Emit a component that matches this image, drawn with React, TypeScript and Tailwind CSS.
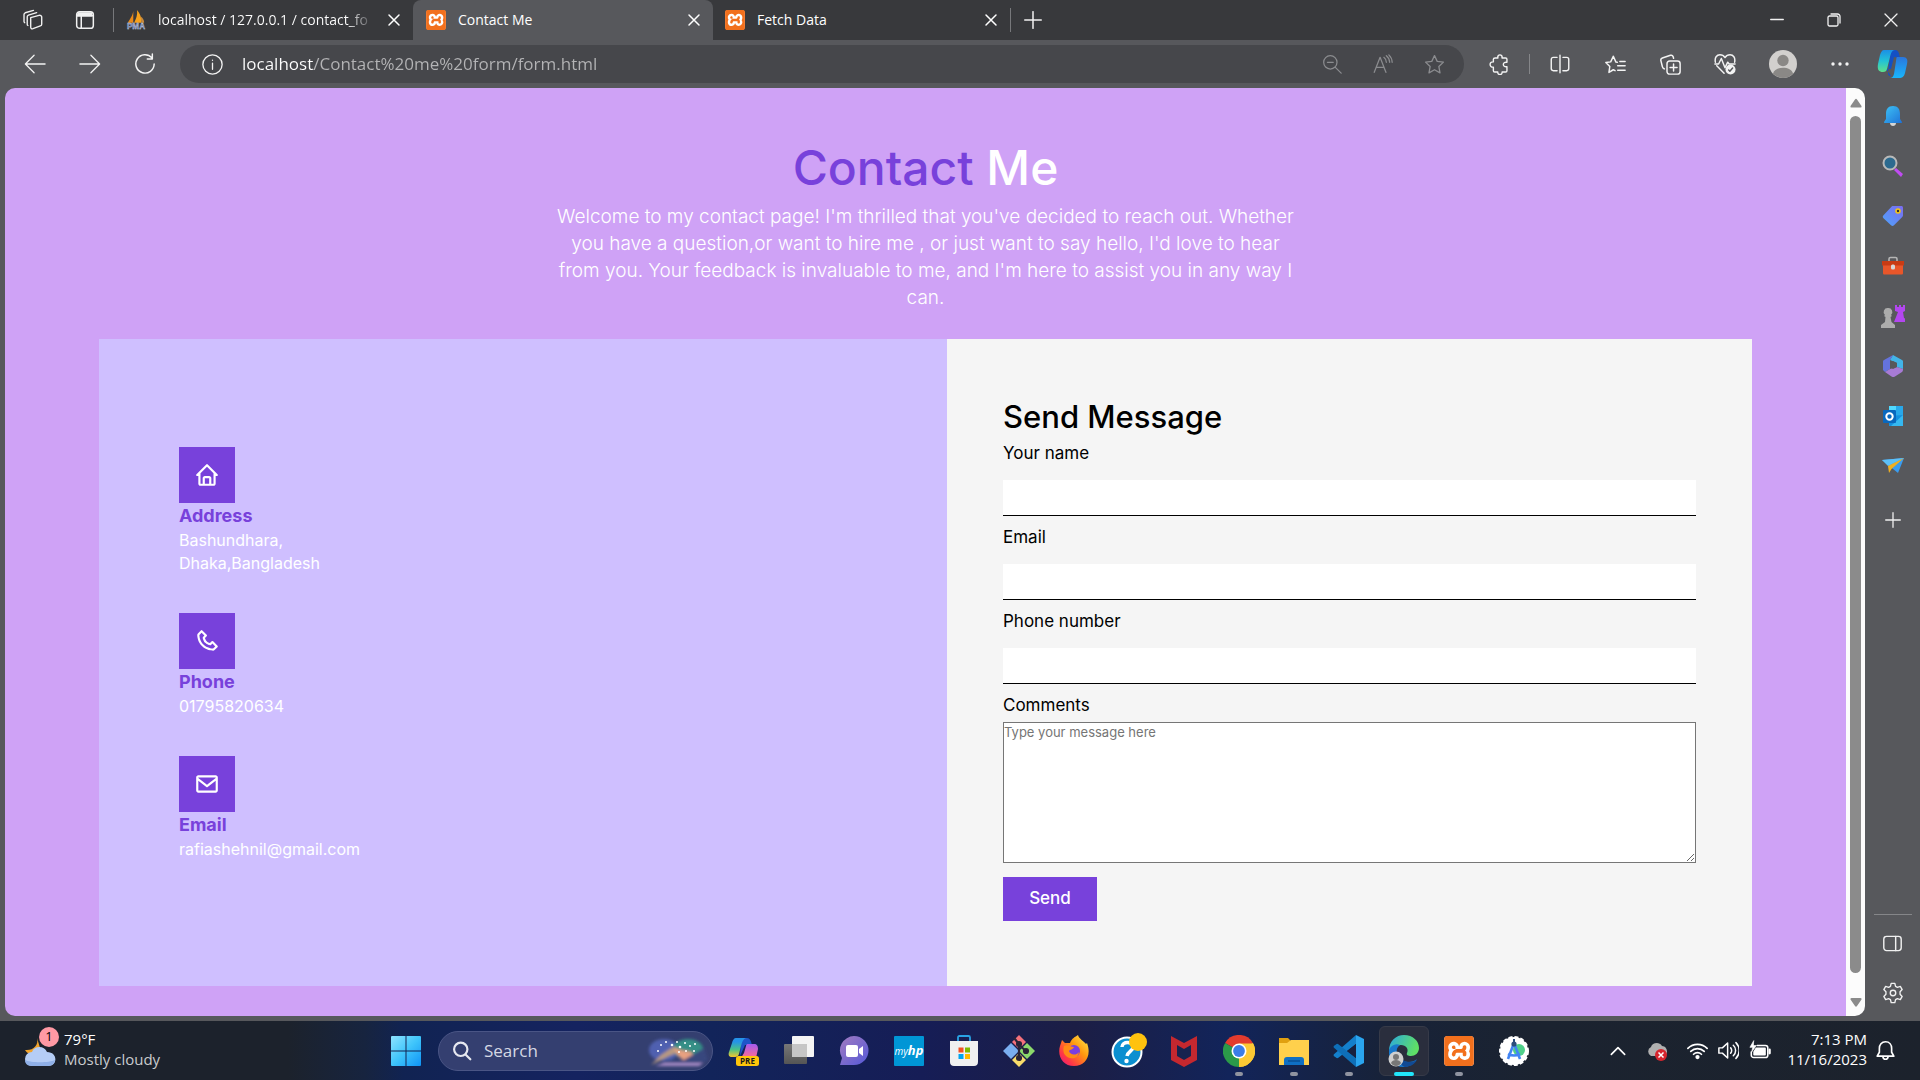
import React from "react";
import { BiHome, BiPhone, BiEnvelope } from "react-icons/bi";
import { SiXampp } from "react-icons/si";

type IconProps = { className?: string; size?: number; box?: string; width?: number; children: React.ReactNode };

function Line({ size = 24, box = "0 0 24 24", width = 1.4, className = "", children }: IconProps) {
  return (
    <svg aria-hidden="true" width={size} height={size} viewBox={box} fill="none" stroke="currentColor" strokeWidth={width} strokeLinecap="round" strokeLinejoin="round" className={`shrink-0 ${className}`}>
      {children}
    </svg>
  );
}

function Art({ size = 32, box = "0 0 32 32", className = "", children }: IconProps) {
  return (
    <svg aria-hidden="true" width={size} height={size} viewBox={box} className={`shrink-0 ${className}`}>
      {children}
    </svg>
  );
}

function IconButton({ label, className = "", children }: { label: string; className?: string; children: React.ReactNode }) {
  return (
    <button type="button" aria-label={label} className={`flex h-full shrink-0 items-center justify-center ${className}`}>
      {children}
    </button>
  );
}

const CloseIcon = () => (
  <Line size={14} box="0 0 14 14" width={1.5}><path d="M2 2l10 10M12 2L2 12" /></Line>
);

const XamppIcon = ({ size }: { size: number }) => (
  <span className="flex shrink-0 rounded-sm bg-white">
    <SiXampp size={size} className="text-[#f2701d]" />
  </span>
);

const PmaIcon = () => (
  <Art size={20} box="0 0 22 22">
    <path d="M8 1C7 7 4 10 2 14h6z" fill="#e8891a" />
    <path d="M12 0c4 4 5 9 5 14H9c2-4 4-9 3-14z" fill="#f7a11b" />
    <path d="M16 7c3 2 4 5 4 7h-3z" fill="#c98b3d" />
    <text x="11" y="21" textAnchor="middle" fontSize="9" fontWeight="700" fontFamily="Liberation Sans, sans-serif" fill="#6c78af" stroke="#dfe2f2" strokeWidth=".3">PMA</text>
  </Art>
);

function Tab({ title, icon, active = false, faded = false, className = "" }: { title: string; icon: React.ReactNode; active?: boolean; faded?: boolean; className?: string }) {
  return (
    <div className={`flex h-10 shrink-0 items-center pr-3 text-sm whitespace-nowrap text-white ${active ? "rounded-t-lg bg-[#57585c]" : ""} ${className}`}>
      {icon}
      <span className={`ml-3 min-w-0 flex-1 ${faded ? "bg-[linear-gradient(90deg,#fff_190px,#55565a_212px)] bg-clip-text text-transparent" : ""}`}>{title}</span>
      <button type="button" aria-label={`Close ${title}`} className="flex shrink-0"><CloseIcon /></button>
    </div>
  );
}

function TabStrip() {
  return (
    <header className="flex h-10 shrink-0 items-center bg-[#38393c] text-[#f1f1f1]">
      <IconButton label="Workspaces" className="ml-[21px] w-6">
        <Line size={22} width={1.5}>
          <path d="M9.5 9.500l9-2.500c1.600-.4 2.800.2 3 1.600v7.900c0 1-.6 1.700-1.500 2l-8 3c-1.500.5-2.500-.3-2.500-1.500z" />
          <path d="M6.500 18c-.6-.3-.8-.8-.8-1.400V8.500c0-1 .4-1.500 1.300-1.900l9-2.600" />
          <path d="M3 15c-.5-.3-.8-.7-.8-1.300V6c0-1 .4-1.500 1.300-1.900l9-2.600" />
        </Line>
      </IconButton>
      <IconButton label="Tab actions" className="ml-[28px] w-6">
        <Line size={20} width={1.8}>
          <rect x="2" y="2" width="20" height="20" rx="3.500" /><path d="M2.500 7h19M7.500 8v14" /><path d="M4 3.500h16v3.500H3z" fill="currentColor" />
        </Line>
      </IconButton>
      <span className="mr-3 ml-4 h-6 w-px shrink-0 bg-[#77787b]" />
      <Tab className="w-[287px]" faded title="localhost / 127.0.0.1 / contact_fo" icon={<PmaIcon />} />
      <Tab className="w-[300px] pl-[13px]" active title="Contact Me" icon={<XamppIcon size={20} />} />
      <Tab className="w-[297px] pl-3" title="Fetch Data" icon={<XamppIcon size={20} />} />
      <span className="h-6 w-px shrink-0 bg-[#77787b]" />
      <IconButton label="New tab" className="ml-[13px]">
        <Line size={18} box="0 0 18 18" width={1.5}><path d="M9 .7v16.600M.7 9h16.600" /></Line>
      </IconButton>
      <div className="mr-px ml-auto flex h-full">
        <IconButton label="Minimize" className="w-[57px]"><Line size={14} box="0 0 14 14" width={1.3}><path d="M.7 6.500h12.600" /></Line></IconButton>
        <IconButton label="Restore" className="w-[57px]">
          <Line size={14} box="0 0 14 14" width={1.3}><rect x="1" y="3" width="10" height="10" rx="1.500" /><path d="M4 1h6.500A2.500 2.500 0 0113 3.500V10" /></Line>
        </IconButton>
        <IconButton label="Close window" className="w-[57px]"><Line size={14} box="0 0 14 14" width={1.3}><path d="M1 1l12 12M13 1L1 13" /></Line></IconButton>
      </div>
    </header>
  );
}

const STAR = "M12 1.800l3.100 6.600 7.100.9-5.200 5 1.300 7.200L12 18l-6.300 3.500 1.300-7.200-5.200-5 7.100-.9z";

const CopilotIcon = () => (
  <Art size={32}>
    <defs>
      <linearGradient id="cp1" x1="0" y1="0" x2="0" y2="1"><stop offset="0" stopColor="#1b8fe6" /><stop offset=".5" stopColor="#22c2d6" /><stop offset="1" stopColor="#5fe08a" /></linearGradient>
      <linearGradient id="cp2" x1="0" y1="0" x2="0" y2="1"><stop offset="0" stopColor="#2a76dd" /><stop offset="1" stopColor="#19b6fb" /></linearGradient>
    </defs>
    <path d="M14 2h4c3 0 4 2 5 8l-6-1-3 12H9l5 7c-3 0-3-2-3-5z" fill="#1450c4" />
    <path d="M7 2h11c-3 0-4 3-5 7l-3 12c-.5 2-1.500 3-4 3-4 0-6-2-5-8l2-9c1-3 2-5 4-5z" fill="url(#cp1)" />
    <path d="M20 9h6c4 0 5 3 4 7l-2 9c-1 4-3 5-6 5h-9c2 0 3-1 4-4l2-13c.3-2 .5-4 1-4z" fill="url(#cp2)" />
  </Art>
);

function AddressBar() {
  return (
    <nav aria-label="Browser toolbar" className="flex h-12 shrink-0 items-center bg-[#57585c] text-[#f3f3f3]">
      <IconButton label="Back" className="w-[55px] pl-[15px]"><Line size={22}><path d="M23 12H2M11 2.500L1.500 12l9.500 9.500" /></Line></IconButton>
      <IconButton label="Forward" className="w-[55px] pl-[15px]"><Line size={22}><path d="M1 12h21M13 2.500l9.500 9.500-9.500 9.500" /></Line></IconButton>
      <IconButton label="Reload" className="w-[55px] pl-[15px]"><Line size={22} width={1.6}><path d="M22 12A10 10 0 1119.500 5.300M20 1v5.500h-5.500" /></Line></IconButton>
      <div className="ml-[15px] flex h-[38px] min-w-0 flex-1 items-center rounded-full bg-[#46474b] pr-[19px] pl-[22px]">
        <Line size={21} width={1.5}><circle cx="12" cy="12" r="11" /><path d="M12 10.500v7M12 7v.2" /></Line>
        <input
          type="text"
          aria-label="Address"
          defaultValue="localhost/Contact%20me%20form/form.html"
          className="ml-[19px] min-w-0 flex-1 bg-[linear-gradient(90deg,#fff_72px,#b4b4b6_72px)] bg-clip-text text-[17px] text-transparent outline-none"
        />
        <div className="flex items-center gap-[31px] text-[#8b8c8f]">
          <button type="button" aria-label="Zoom out" className="flex"><Line size={20} width={1.5}><circle cx="10" cy="10" r="8" /><path d="M16 16l7 7M6.500 10h7" /></Line></button>
          <button type="button" aria-label="Read aloud" className="flex"><Line size={20} width={1.5}><path d="M1.500 22L8.500 4l7 18M4 16h9M13 4c2 1.500 3 3.500 3 6M16 2c3 2.500 4 5 4 8M19 1c3 3 4 6 4 9" /></Line></button>
          <button type="button" aria-label="Favorite" className="flex"><Line size={21} width={1.5}><path d={STAR} /></Line></button>
        </div>
      </div>
      <div className="flex h-full items-center">
        <IconButton label="Extensions" className="ml-[25px] w-5">
          <Line size={21} width={1.6}><path d="M7 4.500h3.200C9.500 2.500 11 1 12.500 1s3 1.500 2.300 3.500H19c1 0 1.500.5 1.500 1.500v3.500c-5.500-1-5.500 6 0 5V19c0 1-.5 1.500-1.500 1.500h-4c.5 4-5.500 4-5 0H6.500c-1 0-1.500-.5-1.500-1.500v-4c-5 .5-5-6.500 0-6V6c0-1 .5-1.500 2-1.500z" /></Line>
        </IconButton>
        <span className="mx-5 h-5 w-px bg-[#858689]" />
        <IconButton label="Split screen" className="w-5"><Line size={20} width={1.7}><path d="M12 1.500v21M8.500 4H4C2.500 4 1.500 5 1.500 6.500v11C1.500 19 2.500 20 4 20h4.500M15.500 4H20c1.500 0 2.500 1 2.500 2.500v11c0 1.500-1 2.500-2.500 2.500h-4.500" /></Line></IconButton>
        <IconButton label="Favorites" className="ml-[35px] w-5"><Line size={21} width={1.7}><path d="M14 9.500l-1.500-.2L9.500 2.500l-3 6.500-5.500.8 4.500 4.500-1 6.800L9.500 18l2 1M17 8.500h6M14.500 13.500H23M14.500 18.500H23" /></Line></IconButton>
        <IconButton label="Collections" className="ml-[35px] w-5"><Line size={21} width={1.7}><rect x="8" y="8" width="15" height="15" rx="3" /><path d="M15.500 11.500v8M11.500 15.500h8M5 17l-.8-.4C3 16 3 15.500 2.600 14L1 7.500C.7 6 1.200 5 2.700 4.500L12 1.500c1.500-.5 2.500.2 3 1.500l.5 1.800" /></Line></IconButton>
        <IconButton label="Browser essentials" className="ml-[35px] w-5">
          <Line size={22} width={1.6}><path d="M1.500 10C.5 5 3 2 6.500 2 9 2 11 3.500 12 5c1-1.500 3-3 5.500-3C21 2 23.500 5 22.500 10M3 14l8 8M1 12h4l3-6 4 10 3-6 1.500 2H23" /><circle cx="18" cy="18" r="5.500" fill="currentColor" stroke="none" /><path d="M16 18.500l1.300 1.300 3-3.500" stroke="#57585c" /></Line>
        </IconButton>
        <IconButton label="Profile" className="ml-[34px] w-7">
          <Art size={28}><circle cx="16" cy="16" r="16" fill="#d2d0ce" /><circle cx="16" cy="12" r="6.500" fill="#8a8886" /><path d="M4.500 27c2-9 21-9 23 0A16 16 0 014.500 27z" fill="#8a8886" /></Art>
        </IconButton>
        <IconButton label="Settings and more" className="ml-[33px] w-5"><Art size={18} box="0 0 18 18"><g fill="#f3f3f3"><circle cx="2" cy="9" r="1.700" /><circle cx="9" cy="9" r="1.700" /><circle cx="16" cy="9" r="1.700" /></g></Art></IconButton>
        <IconButton label="Copilot" className="mr-[11px] ml-[27px] w-8"><CopilotIcon /></IconButton>
      </div>
    </nav>
  );
}

const sideIcons: { label: string; art: React.ReactNode }[] = [
  { label: "Notifications", art: <Art size={22} box="0 0 22 22"><defs><linearGradient id="bell" x1="0" y1="0" x2="1" y2="1"><stop stopColor="#3ec3f5" /><stop offset="1" stopColor="#1e72d8" /></linearGradient></defs><path d="M8 18h6c0 4-6 4-6 0z" fill="#d5d5d5" /><path d="M11 1c5 0 7 3 7 8v5l2 3c0 1-.5 1-1 1H3c-.5 0-1 0-1-1l2-3V9c0-5 2-8 7-8z" fill="url(#bell)" /></Art> },
  { label: "Search", art: <Art size={22} box="0 0 22 22"><path d="M14 13l7 6-2 3-7-7z" fill="#c04bf2" /><circle cx="8" cy="8" r="6.500" fill="#2c6a8f" stroke="#b9b9b9" strokeWidth="2" /></Art> },
  { label: "Shopping", art: <Art size={22} box="0 0 22 22"><defs><linearGradient id="tag" x1="1" y1="0" x2="0" y2="1"><stop stopColor="#7b6cf0" /><stop offset="1" stopColor="#4ea4fb" /></linearGradient></defs><path d="M11 1h8c1.500 0 2 .5 2 2v7c0 1-.3 1.600-1 2.300l-8 8c-1 1-2 1-3 0l-7.500-7c-1-1-1-2 0-3l7.500-8c.7-.8 1-1.300 2-1.300z" fill="url(#tag)" /><circle cx="16" cy="6" r="2" fill="#333" stroke="#f5c518" strokeWidth="1.600" /></Art> },
  { label: "Tools", art: <Art size={22} box="0 0 22 22"><path d="M7 6V4c0-1 .5-1.500 1.500-1.500h5c1 0 1.500.5 1.500 1.500v2" fill="none" stroke="#b5b5b5" strokeWidth="1.600" /><path d="M1 6h20v12c0 1-.5 1.500-1.500 1.500h-17C1.500 19.500 1 19 1 18z" fill="#e8562a" /><path d="M0 6h22v4.500H0z" fill="#c83b14" /><rect x="9" y="9.500" width="4" height="5" rx="1.500" fill="#d8d8d8" /></Art> },
  { label: "Games", art: <Art size={24} box="0 0 24 24"><path d="M14 1h2v2h2V1h2v2h2V1h2v6l-2 1 1 6 2 1v3H13l4-10-3-1z" fill="#b347f0" /><path d="M7 4a4 4 0 013 7l1 1-1.500 1 1 5 3.500 3v3H0v-3l4-3 .5-5L3 12l1-1a4 4 0 013-7z" fill="#acacac" /></Art> },
  { label: "Microsoft 365", art: <Art size={22} box="0 0 22 22"><path d="M11 0l9 5c1 .6 1 1 1 2v7l-6-2V8L8 5z" fill="#42b4e8" /><path d="M11 0L8 5v9l-5 3-2-2V7c0-1 0-1.400 1-2z" fill="#6473dd" /><path d="M3 17l5-3 7-2 6 2c0 2-.3 2.400-1 3l-7 4.500c-1.300.8-2.300.8-3.500 0z" fill="#a77bd5" /><path d="M8 8l3-2 4 2v4l-4 2-3-2z" fill="#57585c" /></Art> },
  { label: "Outlook", art: <Art size={22} box="0 0 22 22"><path d="M7 1h14v20H7z" fill="#28a8ea" /><path d="M7 1h7v7H7z" fill="#50d9ff" /><path d="M7 11l14-1v11H7z" fill="#1490df" /><path d="M21 10L9 21h12z" fill="#35b8f1" /><rect x="1" y="5" width="13" height="13" rx="1" fill="#0868be" /><circle cx="7.500" cy="11.500" r="3.200" fill="none" stroke="#fff" strokeWidth="2" /></Art> },
  { label: "Drop", art: <Art size={22} box="0 0 22 22"><path d="M0 5l22-2-6 15z" fill="#3a9cf0" /><path d="M0 5l22-2L6 11z" fill="#5dc0f8" /><path d="M22 3L6 11l1 7 2.500-4z" fill="#f0b021" /></Art> },
];

function EdgeSidebar() {
  return (
    <aside aria-label="Browser sidebar" className="flex w-[55px] shrink-0 flex-col items-center text-[#f0f0f0]">
      <div className="flex flex-col pt-[3px]">
        {sideIcons.map((i) => (
          <button key={i.label} type="button" aria-label={i.label} className="flex h-[50px] items-center justify-center">{i.art}</button>
        ))}
        <button type="button" aria-label="Add" className="flex h-[58px] items-center justify-center"><Line size={16} box="0 0 16 16" width={1.3}><path d="M8 .7v14.600M.7 8h14.600" /></Line></button>
      </div>
      <div className="mt-auto flex flex-col items-center border-t border-[#858689] px-2 pb-[7px]">
        <button type="button" aria-label="Hide sidebar" className="flex h-14 items-center"><Line size={19} width={1.8}><rect x="1" y="3" width="22" height="18" rx="3.500" /><path d="M16 3v18" /></Line></button>
        <button type="button" aria-label="Settings" className="flex h-[43px] items-center">
          <Line size={22} width={1.5}><circle cx="12" cy="12" r="3" /><path d="M10 1.500h4l.8 3.200 2 1.100 3.200-1 2 3.500-2.300 2.300v2.800l2.300 2.300-2 3.500-3.200-1-2 1.100-.8 3.200h-4l-.8-3.200-2-1.100-3.200 1-2-3.500 2.300-2.300v-2.800L2 8.300l2-3.500 3.200 1 2-1.100z" /></Line>
        </button>
      </div>
    </aside>
  );
}

function ContactItem({ icon, title, children }: { icon: React.ReactNode; title: string; children: React.ReactNode }) {
  return (
    <div>
      <div className="flex size-14 items-center justify-center bg-[#7841db] text-white">{icon}</div>
      <h3 className="text-lg leading-[26px] font-bold text-[#7841db]">{title}</h3>
      <p className="text-base leading-[23px] text-white">{children}</p>
    </div>
  );
}

function Field({ id, label, type }: { id: string; label: string; type: string }) {
  return (
    <div className="mb-[9px] flex flex-col">
      <label htmlFor={id} className="text-[17px] leading-6">{label}</label>
      <input id={id} type={type} className="mt-[15px] h-9 w-full border-b border-black bg-white outline-none" />
    </div>
  );
}

function ContactPage() {
  return (
    <main className="min-w-0 flex-1 overflow-hidden bg-[#cfa2f6] px-[94px] pt-[44px] font-[Inter,sans-serif]">
      <h1 className="text-center text-[48px] leading-[71px] font-medium text-white"><span className="text-[#7841db]">Contact</span> Me</h1>
      <p className="text-center text-[19px] leading-[27px] font-light text-white">
        Welcome to my contact page! I'm thrilled that you've decided to reach out. Whether<br />
        you have a question,or want to hire me , or just want to say hello, I'd love to hear<br />
        from you. Your feedback is invaluable to me, and I'm here to assist you in any way I<br />
        can.
      </p>
      <div className="mt-7 grid grid-cols-[848fr_805fr]">
        <section aria-label="Contact details" className="flex flex-col gap-[38px] bg-[#cfbfff] px-20 pt-[108px]">
          <ContactItem icon={<BiHome size={26} />} title="Address">Bashundhara,<br />Dhaka,Bangladesh</ContactItem>
          <ContactItem icon={<BiPhone size={26} />} title="Phone">01795820634</ContactItem>
          <ContactItem icon={<BiEnvelope size={26} />} title="Email">rafiashehnil@gmail.com</ContactItem>
        </section>
        <form className="bg-[#f5f5f5] px-14 pt-[54px] pb-[65px] text-black">
          <h2 className="text-[31px] leading-[48px] font-medium">Send Message</h2>
          <Field id="name" label="Your name" type="text" />
          <Field id="email" label="Email" type="email" />
          <Field id="phone" label="Phone number" type="tel" />
          <label htmlFor="comments" className="block text-[17px] leading-6">Comments</label>
          <textarea id="comments" placeholder="Type your message here" className="mt-[5px] block h-[141px] w-full resize border border-[#767676] bg-white text-[13px] leading-[18px] placeholder:text-[#757575]" />
          <button type="button" className="mt-[14px] h-11 w-[94px] bg-[#7841db] text-[17px] font-medium text-white">Send</button>
        </form>
      </div>
    </main>
  );
}

function Scrollbar() {
  return (
    <div aria-hidden="true" className="flex w-[19px] shrink-0 flex-col items-center bg-[#fcfcfc] pt-[10px] pb-[7px]">
      <Art size={12} box="0 0 12 12"><path d="M5 1.500q1-1.500 2 0L11.500 8q.5 1.500-1 1.500h-9Q0 9.500.5 8z" fill="#8b8b8b" /></Art>
      <span className="mt-[6px] mb-[24px] w-[11px] flex-1 rounded-full bg-[#8b8b8b]" />
      <Art size={12} box="0 0 12 12"><path d="M5 9q1 1.500 2 0l4.500-6.500Q12 1 10.500 1h-9Q0 1 .5 2.500z" fill="#8b8b8b" /></Art>
    </div>
  );
}

const apps: { label: string; running?: boolean; active?: boolean; art: React.ReactNode }[] = [
  { label: "Copilot preview", art: <Art><defs><linearGradient id="pr1" x1="0" y1="0" x2="0" y2="1"><stop offset=".2" stopColor="#2593e8" /><stop offset=".6" stopColor="#48c18a" /><stop offset="1" stopColor="#f5c72c" /></linearGradient><linearGradient id="pr2" x1="0" y1="0" x2="0" y2="1"><stop stopColor="#a35bf0" /><stop offset="1" stopColor="#ff6b8f" /></linearGradient></defs><path d="M13 3h6c3 0 4 3 5 7h-7l-5 11z" fill="#1d55c9" /><path d="M8 3h10c-3 1-4 4-5 8l-2 8c-.5 2-2 3-4 3H4c-3 0-4-2-3-5L4 8c.7-3 2-5 4-5z" fill="url(#pr1)" /><path d="M20 9h6c3 0 4 2 4 5l-2 9H13l3-5 2-7c.3-1.500 1-2 2-2z" fill="url(#pr2)" /><rect x="8" y="21" width="23" height="10" rx="2.500" fill="#ffc60a" /><text x="19.500" y="29" fontSize="8" fontWeight="700" fontFamily="Open Sans, sans-serif" textAnchor="middle" fill="#1b1b1b">PRE</text></Art> },
  { label: "Task view", art: <Art><defs><linearGradient id="tv" x1="0" y1="0" x2="0" y2="1"><stop stopColor="#777" /><stop offset="1" stopColor="#555" /></linearGradient></defs><rect x="1" y="9" width="23" height="20" rx="1" fill="url(#tv)" /><rect x="9" y="1" width="22" height="21" rx="1" fill="#f4f4f4" /><path d="M9 9h15v13H9z" fill="#c6c6c6" /></Art> },
  { label: "Chat", art: <Art><defs><linearGradient id="chat" x1="0" y1="0" x2="1" y2="1"><stop stopColor="#a27bc0" /><stop offset="1" stopColor="#5559d8" /></linearGradient></defs><path d="M16 1a14.500 14.500 0 110 29H2l2-7A14.500 14.500 0 0116 1z" fill="url(#chat)" /><rect x="8" y="10" width="12" height="12" rx="2" fill="#fff" /><path d="M21 14l4-3v10l-4-3z" fill="#fff" /></Art> },
  { label: "myHP", art: <Art><rect x="1" y="1" width="30" height="30" rx="1" fill="#0096d6" /><text x="16" y="20" textAnchor="middle" fontFamily="Open Sans, sans-serif" fontStyle="italic" fontSize="10" fill="#fff">my<tspan fontWeight="700" fontSize="13">hp</tspan></text></Art> },
  { label: "Microsoft Store", art: <Art><path d="M10 7V2.500C10 1.500 10.500 1 11.500 1h9c1 0 1.500.5 1.500 1.500V7" fill="none" stroke="#29a3e4" strokeWidth="1.800" /><path d="M2 6h28v21c0 2.500-1.500 4-4 4H6c-2.500 0-4-1.500-4-4z" fill="#f0f0f0" /><path d="M10.500 12.500h5v5h-5z" fill="#f25022" /><path d="M17 12.500h5v5h-5z" fill="#7fba00" /><path d="M10.500 19h5v5h-5z" fill="#00a4ef" /><path d="M17 19h5v5h-5z" fill="#ffb900" /></Art> },
  { label: "Git", art: <Art><path d="M16 0l7 7-7 7-7-7z" fill="#f4717b" /><path d="M8 8l8 8-8 8-8-8z" fill="#7aaef0" /><path d="M24 8l8 8-8 8-8-8z" fill="#8bd96b" /><path d="M16 18l7 7-7 7-7-7z" fill="#f8dc6b" /><g stroke="#2a2438" strokeWidth="2.200" fill="#2a2438"><path d="M11 3l5 6v14M16 10l7 6" fill="none" /><circle cx="16" cy="9" r="2" /><circle cx="23" cy="16" r="2" /><circle cx="16" cy="23" r="2" /></g></Art> },
  { label: "Firefox", art: <Art><defs><linearGradient id="ff" x1="1" y1="0" x2="0" y2="1"><stop stopColor="#fff04f" /><stop offset=".4" stopColor="#ff980e" /><stop offset=".75" stopColor="#ff3647" /><stop offset="1" stopColor="#e31587" /></linearGradient></defs><path d="M20 0c1 4 6 6 8 9l1-1c5 13-2 23-13 23C5 31-1 21 2 11l2-6 3 3 5 0c2-5 5-6 8-8z" fill="url(#ff)" /><circle cx="16" cy="16" r="6" fill="#7a3ee0" /><path d="M6 11c4-2 6 1 10 1-1 3-4 2-5 4 1 4 7 5 10 1-1 6-5 7-9 6-5-1-8-6-6-12z" fill="#ff8a16" /></Art> },
  { label: "HP Support", art: <Art size={36} box="0 0 36 36"><circle cx="16" cy="19" r="14.500" fill="#0b8fd0" stroke="#fff" strokeWidth="2" /><path d="M11 14c0-6 11-6 11 0 0 4-5 4-6 9" fill="none" stroke="#fff" strokeWidth="3.500" /><circle cx="15.500" cy="28" r="2.200" fill="#fff" /><circle cx="27" cy="9" r="9" fill="#ffc20e" /></Art> },
  { label: "McAfee", art: <Art><path d="M3 1l13 7 13-7v24l-13 7L3 25z" fill="#c5282f" /><path d="M9 10l7 4 7-4v11l-7 4-7-4z" fill="#17234f" /></Art> },
  { label: "Chrome", running: true, art: <Art><path d="M16 16L2.100 8A16 16 0 0129.900 8z" fill="#e33b2e" /><path d="M16 16l13.900-8A16 16 0 0116 32z" fill="#fcc934" /><path d="M16 16v16A16 16 0 012.100 8z" fill="#2b9a49" /><path d="M16 8.500h14.100A16 16 0 0116 32l6.500-12z" fill="#fcc934" /><circle cx="16" cy="16" r="7.500" fill="#fff" /><circle cx="16" cy="16" r="5.900" fill="#3b7de8" /></Art> },
  { label: "File Explorer", running: true, art: <Art><path d="M1 3h9l3 3h17v10H1z" fill="#e0a010" /><path d="M1 8h8l4-3h18v25H1z" fill="#ffd04c" /><path d="M6 30v-5c0-2 1-3 3-3h14c2 0 3 1 3 3v5z" fill="#0f6fc4" /><path d="M10 26h12" stroke="#0a4f95" strokeWidth="1.500" /></Art> },
  { label: "Visual Studio Code", running: true, art: <Art><path d="M23 0l8 4v24l-8 4z" fill="#2aa5ef" /><path d="M23 0v9L5 23l-1 .3L.7 21v-1.500z" fill="#1480cc" /><path d="M23 32v-9L5 9l-1-.3L.7 11v1.500z" fill="#0e6fb8" /><path d="M23 9v14l-9-7z" fill="#18213f" /></Art> },
  { label: "Edge", running: true, active: true, art: <Art><defs><linearGradient id="ed" x1="0" y1="0" x2="1" y2=".3"><stop stopColor="#2aa8e0" /><stop offset="1" stopColor="#5fe066" /></linearGradient></defs><path d="M1 16C1 6 8 0 16 0c9 0 15 6 15 13 0 5-4 8-8 8-3 0-5-1-4-3 2-4-1-8-6-8C7 10 2 13 1 16z" fill="url(#ed)" /><path d="M1 15c2-5 7-7 11-5-3 2-4 5-3 9 1 5 6 8 11 8 4 0 7-1 9-3-3 5-8 8-14 8C7 32 0 25 1 15z" fill="#1878cc" /><path d="M12 14c-3 7 2 13 10 13 3 0 5-1 7-2-3 5-8 7-12 7-6-2-9-11-5-18z" fill="#114a94" /><circle cx="8" cy="24" r="7.500" fill="#cfcfcf" /><circle cx="8" cy="22" r="3" fill="#777" /><path d="M3 28c1-4 9-4 10 0-2 4-8 4-10 0z" fill="#777" /></Art> },
  { label: "XAMPP", running: true, art: <XamppIcon size={30} /> },
  { label: "Android Studio", art: <Art><circle cx="16" cy="16" r="14" fill="#fff" stroke="#fff" strokeWidth="2" strokeDasharray="4 2" /><circle cx="21" cy="15" r="6" fill="#4fd08a" /><path d="M16 8L10 24M16 8l6 16M10 19q6 3 12 0" fill="none" stroke="#4285f4" strokeWidth="2.600" /><circle cx="16" cy="9" r="2.600" fill="#2b4d7c" /><path d="M16 4v5" stroke="#2b4d7c" strokeWidth="2" /></Art> },
];

function Taskbar() {
  return (
    <footer className="flex h-[59px] shrink-0 items-center bg-[linear-gradient(90deg,#1c222c_0%,#1c222c_15%,#17243f_19%,#112352_21%,#152360_30%,#12245a_37%,#161d56_48%,#1c1e45_56%,#12245a_64%,#172239_72%,#1b2330_80%,#1c222c_100%)] text-white">
      <div className="flex flex-1 basis-0 items-center pl-6">
        <div className="relative">
          <Art size={32} className="mt-1"><path d="M13 1c2 7-4 13-12 12 3 6 13 6 16 1z" fill="#f0a32c" /><path d="M8 29a7 7 0 010-14c2-6 12-7 15 0 11 0 11 14 1 14z" fill="#b5cdf6" /><path d="M8 29c-5 0-7-3-7-6 6 3 24 3 30 0 0 3-3 6-7 6z" fill="#8fb0e8" /></Art>
          <span className="absolute -top-[6px] left-[15px] flex size-5 items-center justify-center rounded-full bg-[#ff99a4] text-[13px] text-black">1</span>
        </div>
        <div className="ml-2 pb-1 text-[15px] leading-5">
          <div>79°F</div>
          <div className="text-[#c9cbce]">Mostly cloudy</div>
        </div>
      </div>
      <div className="ml-3 flex items-center">
        <button type="button" aria-label="Start" className="flex">
          <Art size={30} box="0 0 30 30"><defs><linearGradient id="win" x1="0" y1="0" x2="1" y2="1"><stop stopColor="#8fe3ff" /><stop offset=".5" stopColor="#3fc5fb" /><stop offset="1" stopColor="#0f93f5" /></linearGradient></defs><path d="M1 0h13.500v14.500H0V1q0-1 1-1zM15.500 0H29q1 0 1 1v13.500H15.500zM0 15.500h14.500V30H1q-1 0-1-1zM15.500 15.500H30V29q0 1-1 1H15.500z" fill="url(#win)" /></Art>
        </button>
        <label className="mr-[3px] ml-[17px] flex h-10 w-[275px] items-center overflow-hidden rounded-full border border-[#4a5585] bg-[#343f70] pl-[13px]">
          <Line size={20} width={2.6} className="text-[#e6e8f0]"><circle cx="10.500" cy="10" r="8" /><path d="M16.500 16.500l5.500 5.500" /></Line>
          <input aria-label="Search" placeholder="Search" className="ml-3 w-0 min-w-0 flex-1 bg-transparent text-[17px] outline-none placeholder:text-[#d5d8e4]" />
          <svg aria-hidden="true" width="66" height="38" viewBox="0 0 66 38" className="shrink-0">
            <defs><filter id="soft"><feGaussianBlur stdDeviation="1.500" /></filter></defs>
            <g filter="url(#soft)">
              <ellipse cx="18" cy="18" rx="15" ry="11" fill="#5060b0" />
              <ellipse cx="42" cy="17" rx="15" ry="10" fill="#358f86" />
              <path d="M5 33l10-10 12-8 6 5-10 4z" fill="#b99a80" />
              <path d="M27 15l8 3 10 2 5 6-10 4-8-6z" fill="#e8a080" />
              <path d="M20 28l18 0 20-12 4 12-8 4H14z" fill="#39477e" />
              <path d="M9 34h44l4-3H18z" fill="#a88cc8" />
            </g>
            <g fill="#fff"><circle cx="12" cy="19" r="1" /><circle cx="15" cy="13" r="1" /><circle cx="20" cy="10" r="1" /><circle cx="26" cy="13" r="1.300" /><circle cx="31" cy="10" r="1" /><circle cx="34" cy="15" r="1.300" /><circle cx="39" cy="11" r="1" /><circle cx="44" cy="14" r="1" /><circle cx="49" cy="12" r="1" /><circle cx="33" cy="20" r="1" /><circle cx="40" cy="19" r="1" /><circle cx="48" cy="19" r="1" /></g>
          </svg>
        </label>
        {apps.map((a) => (
          <button key={a.label} type="button" aria-label={a.label} className="relative flex h-[50px] w-[55px] items-center justify-center">
            {a.active && <span className="absolute inset-y-0 left-[3px] w-[50px] rounded-md border border-[#363a48] bg-[#2a2e3d]" />}
            <span className="relative flex">{a.art}</span>
            {a.running && <span className={`absolute bottom-0 rounded-full ${a.active ? "h-1 w-5 bg-[#21e6fb]" : "h-1 w-2 bg-[#9094a0]"}`} />}
          </button>
        ))}
      </div>
      <div className="flex flex-1 basis-0 items-center justify-end pr-6">
        <Line size={16} width={2.5}><path d="M2 17L12 7l10 10" /></Line>
        <Art size={22} box="0 0 22 22" className="mr-[19px] ml-[20px]"><path d="M5 16a5 5 0 010-9c1-4 8-6 11-1 6 0 7 10 1 10z" fill="#b0b0b0" /><circle cx="15" cy="15" r="6" fill="#d6252e" /><path d="M12.500 12.500l5 5M17.500 12.500l-5 5" stroke="#fff" strokeWidth="1.500" /></Art>
        <Line size={21} width={1.9}><path d="M1 9.500a15.500 15.500 0 0122 0M4.300 13a11 11 0 0115.400 0M7.500 16.300a6.500 6.500 0 019 0" /><circle cx="12" cy="19.500" r="1.500" fill="currentColor" /></Line>
        <Line size={21} width={1.7} className="mx-[10px]"><path d="M1 9h4l6-5.500v17L5 15H1zM14.500 9c1.500 1.500 1.500 4.500 0 6M17.500 6c3.500 3 3.500 9 0 12M20.500 3c5 5 5 13 0 18" /></Line>
        <Line size={22} width={1.7}><path d="M9 6h9a2.500 2.500 0 012.500 2.500v8A2.500 2.500 0 0118 19H5a2.500 2.500 0 01-2.500-2.500V13" /><path d="M8 9h9.500v7H5.500v-3z" fill="currentColor" /><path d="M22.500 10.500v4" strokeWidth="2.500" /><path d="M5 1L1 8h3l-1 5 5-7H5z" fill="currentColor" strokeWidth=".7" /></Line>
        <time className="mr-2 ml-4 pb-1 text-right text-[15px] leading-5">7:13 PM<br />11/16/2023</time>
        <button type="button" aria-label="Notifications" className="flex"><Line size={21} width={1.9}><path d="M12 2c4.500 0 7 3.500 7 7.500v4.500l2.500 4.500h-19L5 14V9.500C5 5.500 7.500 2 12 2zM9 19c.5 4 5.500 4 6 0" /></Line></button>
      </div>
    </footer>
  );
}

export default function App() {
  return (
    <div className="flex h-screen flex-col overflow-hidden bg-[#57585c] font-['Open_Sans',sans-serif]">
      <TabStrip />
      <AddressBar />
      <div className="flex min-h-0 flex-1">
        <div className="mb-[5px] ml-[5px] flex min-w-0 flex-1 overflow-hidden rounded-[10px]">
          <ContactPage />
          <Scrollbar />
        </div>
        <EdgeSidebar />
      </div>
      <Taskbar />
    </div>
  );
}
